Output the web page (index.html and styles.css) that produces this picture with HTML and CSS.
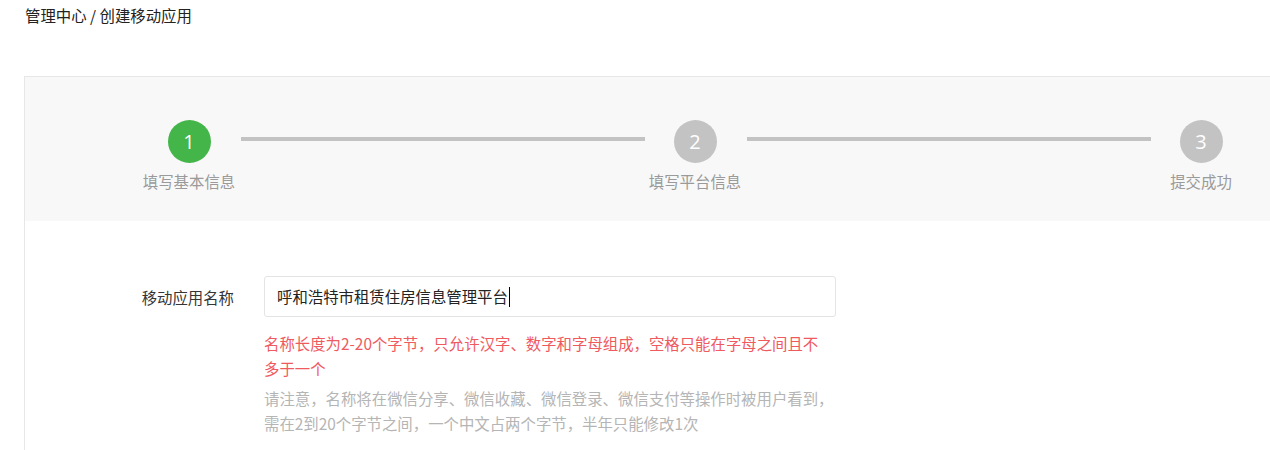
FILE: index.html
```html
<!DOCTYPE html>
<html lang="zh-CN">
<head>
<meta charset="utf-8">
<title>创建移动应用</title>
<link rel="stylesheet" href="styles.css">
</head>
<body>
<div class="page">
  <div class="breadcrumb">管理中心 / 创建移动应用</div>
  <div class="panel">
    <div class="steps">
      <div class="step active">
        <div class="step-circle">1</div>
        <div class="step-label">填写基本信息</div>
      </div>
      <div class="step-line"></div>
      <div class="step">
        <div class="step-circle">2</div>
        <div class="step-label">填写平台信息</div>
      </div>
      <div class="step-line"></div>
      <div class="step">
        <div class="step-circle">3</div>
        <div class="step-label">提交成功</div>
      </div>
    </div>
    <div class="form">
      <div class="form-row">
        <div class="form-label">移动应用名称</div>
        <div class="form-input">呼和浩特市租赁住房信息管理平台<span class="caret"></span></div>
      </div>
      <div class="form-error">名称长度为2-20个字节，只允许汉字、数字和字母组成，空格只能在字母之间且不多于一个</div>
      <div class="form-help">请注意，名称将在微信分享、微信收藏、微信登录、微信支付等操作时被用户看到，需在2到20个字节之间，一个中文占两个字节，半年只能修改1次</div>
    </div>
  </div>
</div>
</body>
</html>
```
FILE: styles.css
```css
html, body {
  margin: 0;
  padding: 0;
  overflow: hidden;
  background: #ffffff;
}
body {
  font-family: "Noto Sans CJK SC", "Noto Sans", sans-serif;
  font-size: 15.4px;
  color: #353535;
}
.page {
  padding: 3px 0 0 24px;
}
.breadcrumb {
  line-height: 25px;
  padding-left: 1px;
  color: #222222;
}
.panel {
  margin-top: 48px;
  width: 1300px;
  border: 1px solid #e7e7e7;
  background: #ffffff;
}
.steps {
  display: flex;
  align-items: flex-start;
  height: 101px;
  padding: 43px 0 0 114px;
  background: #f8f8f8;
}
.step {
  width: 100px;
  flex: none;
  display: flex;
  flex-direction: column;
  align-items: center;
}
.step-circle {
  width: 43px;
  height: 43px;
  border-radius: 50%;
  background: #c3c3c3;
  color: #ffffff;
  font-family: "Open Sans", "Noto Sans", sans-serif;
  font-size: 20px;
  line-height: 43px;
  text-align: center;
}
.step.active .step-circle {
  background: #44b549;
}
.step-label {
  margin-top: 8px;
  line-height: 20px;
  color: #9a9a9a;
  white-space: nowrap;
}
.step-line {
  flex: none;
  width: 404px;
  height: 4px;
  margin: 17px 0 0 2px;
  background: #c3c3c3;
}
.form {
  padding: 55px 0 40px;
}
.form-row {
  display: flex;
  align-items: center;
}
.form-label {
  width: 209px;
  margin-right: 30px;
  text-align: right;
  color: #353535;
}
.form-input {
  box-sizing: border-box;
  width: 572px;
  height: 41px;
  padding: 0 12px;
  border: 1px solid #e4e4e4;
  border-radius: 3px;
  line-height: 39px;
  color: #222222;
  display: flex;
  align-items: center;
}
.caret {
  display: inline-block;
  width: 1px;
  height: 20px;
  margin-left: 1px;
  background: #000000;
}
.form-error {
  margin: 14px 0 0 239px;
  width: 562px;
  line-height: 25px;
  color: #ef5a5f;
}
.form-help {
  margin: 5px 0 0 239px;
  width: 572px;
  line-height: 25px;
  color: #b5b5b5;
}
```
